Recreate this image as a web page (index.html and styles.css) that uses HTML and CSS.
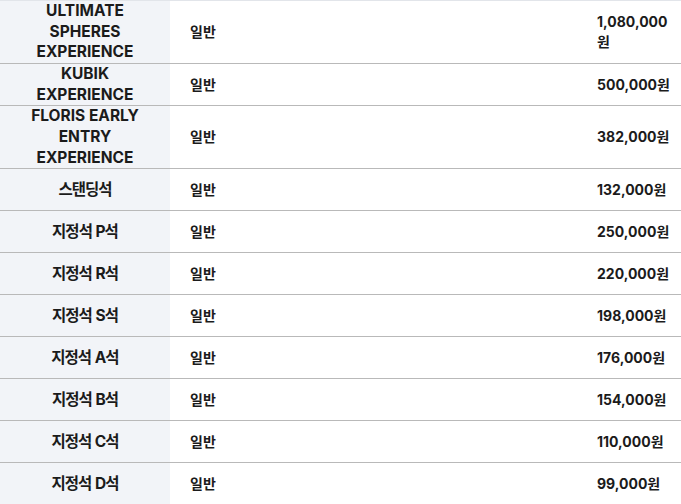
FILE: index.html
```html
<!DOCTYPE html>
<html lang="ko">
<head>
<meta charset="utf-8">
<title>가격표</title>
<link rel="stylesheet" href="styles.css">
</head>
<body>
<table class="price-table">
  <colgroup>
    <col class="col-seat">
    <col class="col-type">
    <col class="col-price">
  </colgroup>
  <tbody>
    <tr><th>ULTIMATE SPHERES EXPERIENCE</th><td>일반</td><td>1,080,000원</td></tr>
    <tr><th>KUBIK EXPERIENCE</th><td>일반</td><td>500,000원</td></tr>
    <tr><th>FLORIS EARLY ENTRY EXPERIENCE</th><td>일반</td><td>382,000원</td></tr>
    <tr><th class="seat-ko">스탠딩석</th><td>일반</td><td>132,000원</td></tr>
    <tr><th class="seat-ko">지정석 P석</th><td>일반</td><td>250,000원</td></tr>
    <tr><th class="seat-ko">지정석 R석</th><td>일반</td><td>220,000원</td></tr>
    <tr><th class="seat-ko">지정석 S석</th><td>일반</td><td>198,000원</td></tr>
    <tr><th class="seat-ko">지정석 A석</th><td>일반</td><td>176,000원</td></tr>
    <tr><th class="seat-ko">지정석 B석</th><td>일반</td><td>154,000원</td></tr>
    <tr><th class="seat-ko">지정석 C석</th><td>일반</td><td>110,000원</td></tr>
    <tr><th class="seat-ko">지정석 D석</th><td>일반</td><td>99,000원</td></tr>
  </tbody>
</table>
</body>
</html>
```
FILE: styles.css
```css
html, body {
  margin: 0;
  padding: 0;
  background: #ffffff;
}

.price-table {
  width: 681px;
  table-layout: fixed;
  border-collapse: collapse;
  border-top: 1px solid #e2e5ea;
  font-family: "Inter", "Noto Sans CJK KR", sans-serif;
  font-size: 14px;
  font-weight: 700;
  line-height: 20px;
  color: #1b1b1b;
}

.col-seat { width: 170px; }
.col-price { width: 104px; }

.price-table tr {
  border-bottom: 1px solid #b9b9b9;
}

.price-table th {
  background: #f2f4f8;
  text-align: center;
  vertical-align: middle;
  padding: 0 16px;
  font-size: 15.5px;
  line-height: 20.67px;
  font-weight: 700;
}

.price-table th.seat-ko {
  letter-spacing: -1px;
  word-spacing: 1px;
}

.price-table td {
  text-align: left;
  vertical-align: middle;
  padding: 10.5px 10px 10.5px 20px;
}
```
